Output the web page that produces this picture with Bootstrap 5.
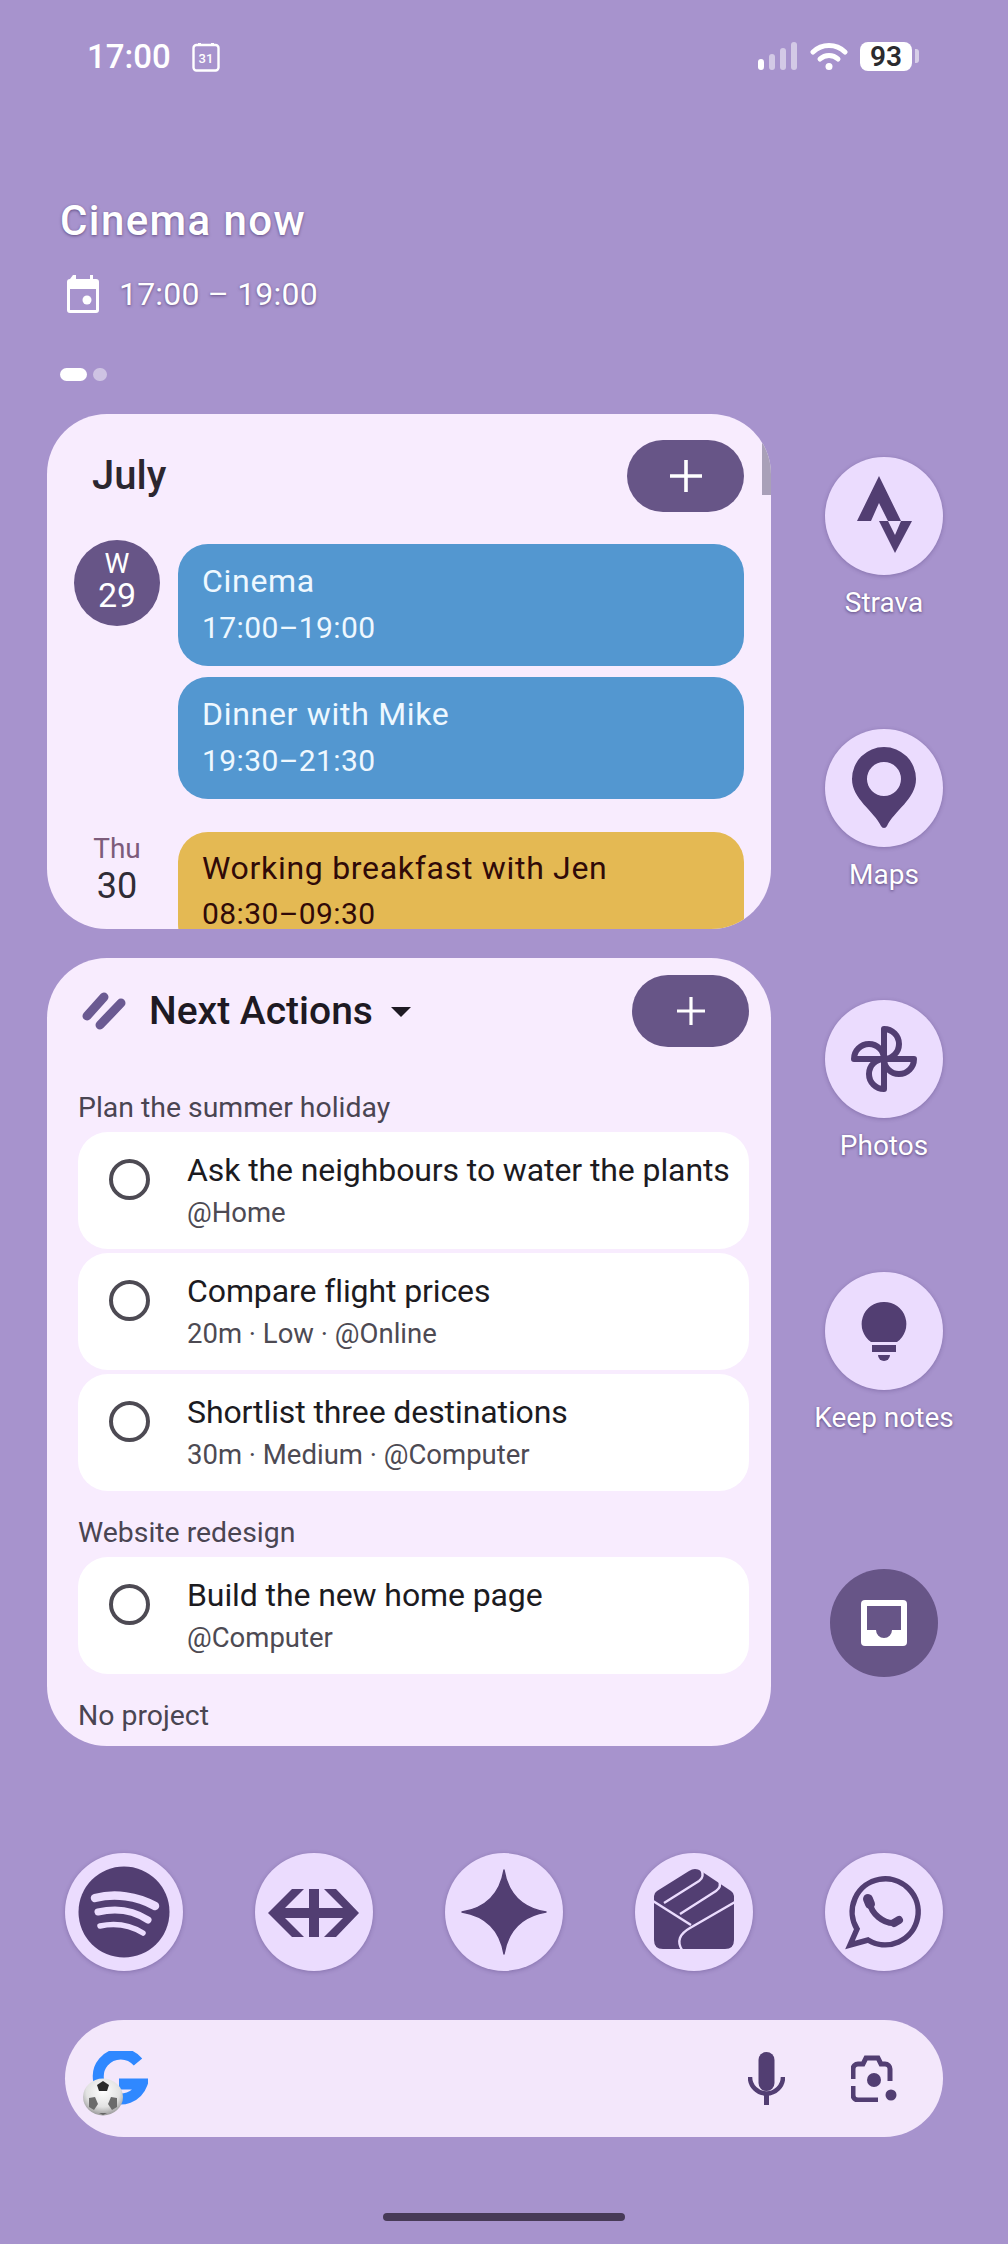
<!DOCTYPE html>
<html lang="en">
<head>
    <meta charset="UTF-8">
    <meta name="viewport" content="width=device-width, initial-scale=1.0">
    <title>Home screen</title>
    <link href="https://cdn.jsdelivr.net/npm/bootstrap@5.3.0/dist/css/bootstrap.min.css" rel="stylesheet">
    <style>
        body {
            background: #a793cd;
            width: 1008px;
            height: 2244px;
            overflow: hidden;
            font-family: Roboto, "Liberation Sans", sans-serif;
            color: #1f1a24;
        }
        /* status bar */
        .status-row { height: 114px; padding: 41px 89px 0 87px; }
        .status-time { font-size: 33px; font-weight: 500; color: #fff; line-height: 32px; }
        .status-cal { margin: 1px 0 0 21px; }
        .status-right { height: 30px; }
        .status-wifi { margin-left: 12px; }
        .batt { width: 52px; height: 29px; margin-left: 12px; background: #fff; border-radius: 8px; color: #2b2b2e; font-size: 28px; font-weight: 600; line-height: 29px; text-align: center; }
        .batt-nub { width: 4px; height: 14px; background: rgba(255,255,255,.55); border-radius: 0 3px 3px 0; margin-left: 3px; }
        /* at a glance */
        .glance { padding: 84px 0 0 60px; height: 300px; color: #fff; text-shadow: 0 1px 3px rgba(40,20,70,.55); }
        .glance-title { font-size: 42px; font-weight: 500; line-height: 46px; letter-spacing: 1.4px; }
        .glance-time { font-size: 32px; line-height: 40px; margin-top: 30px; gap: 18px; letter-spacing: .2px; }
        .glance-cal { margin-left: 5px; }
        .page-dots { margin-top: 54px; gap: 6px; }
        .page-dots span { display: block; height: 13px; border-radius: 7px; }
        .dot-on { width: 27px; background: #fff; }
        .dot-off { width: 14px; background: rgba(255,255,255,.45); }
        /* widgets */
        .main-row { padding-left: 47px; }
        .wg { width: 724px; border: 0; border-radius: 60px; background: #f8ecfe; overflow: hidden; position: relative; }
        .wg-cal { height: 515px; padding: 26px 27px 0 27px; }
        .wg-tasks { height: 788px; margin-top: 29px; padding: 17px 22px 0 31px; }
        .add-btn { width: 117px; height: 72px; border: 0; border-radius: 36px; background: #675587; padding: 0; display: flex; align-items: center; justify-content: center; }
        .add-btn:hover { background: #675587; }
        .month { font-size: 40px; font-weight: 500; line-height: 72px; margin-left: 18px; color: #2c2730; }
        .scroll-thumb { position: absolute; right: 0; top: 26px; width: 9px; height: 55px; background: #a9a0b8; }
        .cal-day { gap: 18px; margin-top: 28px; }
        .cal-day + .cal-day { margin-top: 34px; }
        .day-col { width: 86px; flex: none; text-align: center; }
        .day-now { width: 86px; height: 86px; background: #675587; color: #fff; display: flex; flex-direction: column; align-items: center; padding-top: 10px; }
        .day-now b { font-weight: 400; font-size: 28px; line-height: 28px; }
        .day-now span { font-size: 34px; line-height: 34px; }
        .day-name { font-size: 28px; line-height: 34px; color: #7d5c7b; margin-top: -1px; }
        .day-num { font-size: 36px; line-height: 38px; color: #302c36; margin-top: 1px; }
        .ev-col { width: 566px; gap: 11px; padding-top: 4px; }
        .ev { height: 122px; border-radius: 30px; padding: 19px 24px 0; background: #5397d0; color: #eef8ff; }
        .ev-t { font-size: 32px; line-height: 36px; letter-spacing: .7px; }
        .ev-s { font-size: 30px; line-height: 36px; margin-top: 11px; letter-spacing: .4px; }
        .ev-y { background: #e4b953; color: #300a08; margin-top: -1px; padding-top: 18px; }
        .ev-y .ev-s { margin-top: 10px; }
        .ev-col-2 { padding-top: 0; }
        .tasks-head { height: 72px; }
        .tasks-icon { margin-left: 3px; flex: none; }
        .tasks-title { font-size: 39px; font-weight: 500; color: #1e1a23; margin-left: 22px; line-height: 72px; }
        .caret-down { width: 0; height: 0; border: 10px solid transparent; border-top: 10px solid #1e1a23; border-bottom: 0; margin-left: 18px; margin-top: 2px; }
        .proj { font-size: 28.4px; line-height: 34px; color: #4a4552; }
        .proj-1 { margin-top: 44px; }
        .proj-2, .proj-3 { margin-top: 25px; }
        .task-list { margin-top: 7px; gap: 4px; }
        .task { height: 117px; border: 0 !important; border-radius: 30px !important; background: #fff; padding: 19px 10px 0 31px; gap: 37px; margin: 0 !important; }
        .tick { width: 41px; height: 41px; flex: none; border: 4.5px solid #4d4a53; border-radius: 50%; margin-top: 8px; }
        .task-t { font-size: 32px; line-height: 38px; color: #1c1b1f; letter-spacing: -.1px; }
        .task-s { font-size: 27.5px; line-height: 34px; color: #4d4a53; margin-top: 7px; }
        /* launcher */
        .apps-col { width: 118px; margin-left: 54px; padding-top: 43px; }
        .app { height: 271.67px; width: 118px; }
        .app-circ { width: 118px; height: 118px; background: #ebdcfe; box-shadow: 0 1px 4px rgba(60,40,100,.3); flex: none; display: block; }
        .app-label { font-size: 28px; line-height: 34px; color: #fff; text-shadow: 0 1px 3px rgba(40,20,70,.6); white-space: nowrap; margin-top: 11px; }
        .inbox-btn { width: 108px; height: 108px; background: #675587; margin: 25px auto 0; display: block; }
        .dock { margin-top: 107px; padding: 0 65px; }
        .search { margin: 49px 65px 0; height: 117px; background: #f3e7fb; position: relative; }
        .g-ball { position: absolute; left: 18px; top: 58px; }
        .g-mark { margin-left: 27px; }
        .lens-icon { margin: 0 46px 0 66px; }
        .home-bar { width: 242px; height: 8px; background: #473a57; border-radius: 4px; margin: 76px auto 0; }
    </style>
</head>
<body>
    <div class="status-row d-flex justify-content-between">
        <div class="d-flex align-items-start">
            <span class="status-time">17:00</span>
            <svg class="status-cal" width="28" height="30" viewBox="0 0 28 30"><rect x="1.500" y="3" width="25" height="25.500" rx="3" fill="none" stroke="#fff" stroke-width="2.400"/><rect x="6" y="1" width="3" height="3" fill="#fff"/><rect x="19" y="1" width="3" height="3" fill="#fff"/><text x="14" y="21" font-size="13" font-family="Roboto" font-weight="500" text-anchor="middle" fill="#fff">31</text></svg>
        </div>
        <div class="status-right d-flex align-items-center">
            <svg width="40" height="28" viewBox="0 0 40 28"><rect x="0" y="17" width="6" height="11" rx="3" fill="#fff"/><rect x="11" y="12" width="6" height="16" rx="3" fill="#fff" opacity=".5"/><rect x="22" y="6" width="6" height="22" rx="3" fill="#fff" opacity=".5"/><rect x="33" y="0" width="6" height="28" rx="3" fill="#fff" opacity=".5"/></svg>
            <svg class="status-wifi" width="38" height="28" viewBox="0 0 38 28"><path d="M3 10 A23 23 0 0 1 35 10" fill="none" stroke="#fff" stroke-width="5" stroke-linecap="round"/><path d="M10 17 A13 13 0 0 1 28 17" fill="none" stroke="#fff" stroke-width="5" stroke-linecap="round"/><circle cx="19" cy="24.500" r="3.500" fill="#fff"/></svg>
            <div class="batt">93</div>
            <div class="batt-nub"></div>
        </div>
    </div>

    <div class="glance">
        <div class="glance-title">Cinema now</div>
        <div class="glance-time d-flex align-items-center">
            <svg class="glance-cal" width="36" height="40" viewBox="0 0 36 40"><path d="M8 1h3v4h14V1h3v4h3a3 3 0 0 1 3 3v28a3 3 0 0 1-3 3H5a3 3 0 0 1-3-3V8a3 3 0 0 1 3-3zM5 15v21h26V15z" fill="#fff"/><circle cx="22" cy="26" r="4.500" fill="#fff"/></svg>
            <span>17:00 – 19:00</span>
        </div>
        <div class="page-dots d-flex"><span class="dot-on"></span><span class="dot-off"></span></div>
    </div>

    <div class="main-row d-flex align-items-start">
        <div>
            <div class="card wg wg-cal">
                <div class="scroll-thumb"></div>
                <div class="d-flex justify-content-between">
                    <div class="month">July</div>
                    <button class="btn add-btn" aria-label="Add"><svg width="36" height="36" viewBox="0 0 36 36"><path d="M18 2v32M2 18h32" stroke="#fff" stroke-width="3.600"/></svg></button>
                </div>
                <div class="cal-day d-flex">
                    <div class="day-col"><div class="day-now rounded-circle"><b>W</b><span>29</span></div></div>
                    <div class="ev-col d-flex flex-column">
                        <div class="ev"><div class="ev-t">Cinema</div><div class="ev-s">17:00–19:00</div></div>
                        <div class="ev"><div class="ev-t">Dinner with Mike</div><div class="ev-s">19:30–21:30</div></div>
                    </div>
                </div>
                <div class="cal-day d-flex">
                    <div class="day-col"><div class="day-name">Thu</div><div class="day-num">30</div></div>
                    <div class="ev-col ev-col-2 d-flex flex-column">
                        <div class="ev ev-y"><div class="ev-t">Working breakfast with Jen</div><div class="ev-s">08:30–09:30</div></div>
                    </div>
                </div>
            </div>

            <div class="card wg wg-tasks">
                <div class="tasks-head d-flex align-items-center">
                    <svg class="tasks-icon" width="46" height="38" viewBox="0 0 46 38"><path d="M6 24 L23 5 M19 33 L40 11" stroke="#6b5a92" stroke-width="9" stroke-linecap="round"/></svg>
                    <span class="tasks-title">Next Actions</span>
                    <span class="caret-down"></span>
                    <button class="btn add-btn ms-auto" aria-label="Add"><svg width="30" height="30" viewBox="0 0 30 30"><path d="M15 1v28M1 15h28" stroke="#fff" stroke-width="3.200"/></svg></button>
                </div>
                <div class="proj proj-1">Plan the summer holiday</div>
                <ul class="list-group task-list">
                    <li class="list-group-item task d-flex"><span class="tick"></span><div><div class="task-t">Ask the neighbours to water the plants</div><div class="task-s">@Home</div></div></li>
                    <li class="list-group-item task d-flex"><span class="tick"></span><div><div class="task-t">Compare flight prices</div><div class="task-s">20m · Low · @Online</div></div></li>
                    <li class="list-group-item task d-flex"><span class="tick"></span><div><div class="task-t">Shortlist three destinations</div><div class="task-s">30m · Medium · @Computer</div></div></li>
                </ul>
                <div class="proj proj-2">Website redesign</div>
                <ul class="list-group task-list">
                    <li class="list-group-item task d-flex"><span class="tick"></span><div><div class="task-t">Build the new home page</div><div class="task-s">@Computer</div></div></li>
                </ul>
                <div class="proj proj-3">No project</div>
            </div>
        </div>

        <div class="apps-col">
            <div class="app d-flex flex-column align-items-center">
                <svg class="app-circ rounded-circle" viewBox="0 0 118 118"><path d="M54 19 L32 64 H46 L54 46 L63 64 H76Z M54 64 L70 96 L87 64 H76 L70 78 L63 64Z" fill="#523e72"/></svg>
                <div class="app-label">Strava</div>
            </div>
            <div class="app d-flex flex-column align-items-center">
                <svg class="app-circ rounded-circle" viewBox="0 0 118 118"><path fill-rule="evenodd" d="M59 18a32 32 0 0 1 32 32c0 20-22 32-29 47a3.300 3.300 0 0 1-6 0C49 82 27 70 27 50a32 32 0 0 1 32-32zm0 15a17 17 0 1 0 0 34 17 17 0 0 0 0-34z" fill="#523e72"/></svg>
                <div class="app-label">Maps</div>
            </div>
            <div class="app d-flex flex-column align-items-center">
                <svg class="app-circ rounded-circle" viewBox="0 0 118 118"><path d="M59 59V29A15 15 0 0 1 59 59ZM59 59H89A15 15 0 0 1 59 59ZM59 59V89A15 15 0 0 1 59 59ZM59 59H29A15 15 0 0 1 59 59Z" fill="none" stroke="#523e72" stroke-width="6" stroke-linejoin="round"/></svg>
                <div class="app-label">Photos</div>
            </div>
            <div class="app d-flex flex-column align-items-center">
                <svg class="app-circ rounded-circle" viewBox="0 0 118 118"><path d="M59 30a22 22 0 0 1 13 40H46a22 22 0 0 1 13-40z" fill="#523e72"/><rect x="47" y="73" width="24" height="7" fill="#523e72"/><path d="M53 83h12a6 6 0 0 1-12 0z" fill="#523e72"/></svg>
                <div class="app-label">Keep notes</div>
            </div>
            <svg class="inbox-btn rounded-circle" viewBox="0 0 108 108"><rect x="31" y="31" width="46" height="46" rx="4" fill="#fff"/><path d="M37 37H71V61H62A8 8 0 0 1 46 61H37Z" fill="#675587"/></svg>
        </div>
    </div>

    <div class="dock d-flex justify-content-between">
        <svg class="app-circ rounded-circle" viewBox="0 0 118 118"><circle cx="59" cy="59" r="45.500" fill="#523e72"/><path d="M30 45C50 40 72 43 90 53" fill="none" stroke="#ebdcfe" stroke-width="8.500" stroke-linecap="round"/><path d="M33 59C50 55 68 57 83 67" fill="none" stroke="#ebdcfe" stroke-width="7" stroke-linecap="round"/><path d="M35 73C49 70 65 72 78 80" fill="none" stroke="#ebdcfe" stroke-width="5.500" stroke-linecap="round"/></svg>
        <svg class="app-circ rounded-circle" viewBox="0 0 118 118"><path d="M13 60L37 36H49L30 55H54V36H64V55H88L69 36H81L104 60L81 84H69L88 65H64V84H54V65H30L49 84H37Z" fill="#523e72"/></svg>
        <svg class="app-circ rounded-circle" viewBox="0 0 118 118"><path d="M59 17Q65 53 101 59Q65 65 59 101Q53 65 17 59Q53 53 59 17Z" fill="#523e72" stroke="#523e72" stroke-width="1.500" stroke-linejoin="round"/></svg>
        <svg class="app-circ rounded-circle" viewBox="0 0 118 118"><path d="M19 43Q19 40 22 38L54 18Q60 14 66 18L96 38Q99 40 99 43V87Q99 96 90 96H28Q19 96 19 87Z" fill="#523e72"/><g fill="none" stroke="#ebdcfe" stroke-width="2.400"><path d="M29 50L64 28Q70 24 66 16"/><path d="M45 61L81 38Q87 34 84 27"/><path d="M18 48L56 72"/><path d="M100 49L55 75Q39 84 47 97"/></g></svg>
        <svg class="app-circ rounded-circle" viewBox="0 0 118 118"><path d="M25 92L32 76A33 33 0 1 1 43 87Z" fill="none" stroke="#523e72" stroke-width="5.500" stroke-linejoin="miter"/><path d="M45 50C46 60 58 71 70 70" fill="none" stroke="#523e72" stroke-width="6"/><path d="M43 46L45 51" stroke="#523e72" stroke-width="10" stroke-linecap="round"/><path d="M69 70L74 67" stroke="#523e72" stroke-width="8" stroke-linecap="round"/></svg>
    </div>

    <div class="search rounded-pill d-flex align-items-center">
        <svg class="g-mark" width="56" height="56" viewBox="0 0 56 56"><path d="M46 11A22.500 22.500 0 1 0 50 33H27" fill="none" stroke="#2f88ff" stroke-width="11"/></svg>
        <svg class="g-ball" width="40" height="38" viewBox="0 0 40 38"><defs><radialGradient id="ballShade" cx=".5" cy=".35" r=".7"><stop offset="0" stop-color="#fff"/><stop offset=".6" stop-color="#e2e2e2"/><stop offset="1" stop-color="#8a8a8a"/></radialGradient></defs><ellipse cx="20" cy="19" rx="20" ry="18.500" fill="url(#ballShade)"/><path d="M20 3l6 4-2 6h-8l-2-6z" fill="#2a2a2a"/><path d="M6 20l6-1 3 7-4 6-5-3z" fill="#6b6b6b"/><path d="M34 20l-6-1-3 7 4 6 5-3z" fill="#6b6b6b"/><path d="M16 35h8l-4 2z" fill="#666"/></svg>
        <svg class="ms-auto" width="37" height="53" viewBox="0 0 37 53"><rect x="10.500" y="0" width="16" height="39" rx="8" fill="#523e72"/><path d="M2 25a16.500 16.500 0 0 0 33 0" fill="none" stroke="#523e72" stroke-width="4.500"/><path d="M18.500 41v12" stroke="#523e72" stroke-width="5"/></svg>
        <svg class="lens-icon" width="46" height="47" viewBox="0 0 46 47"><path d="M2 24V14a5 5 0 0 1 5-5h5l3-6h12l3 6h4a5 5 0 0 1 5 5v12" fill="none" stroke="#523e72" stroke-width="5"/><path d="M2 31v9a5 5 0 0 0 5 5h20" fill="none" stroke="#523e72" stroke-width="5"/><circle cx="23" cy="25" r="7" fill="#523e72"/><circle cx="40" cy="40" r="5.500" fill="#523e72"/></svg>
    </div>

    <div class="home-bar"></div>
</body>
</html>
